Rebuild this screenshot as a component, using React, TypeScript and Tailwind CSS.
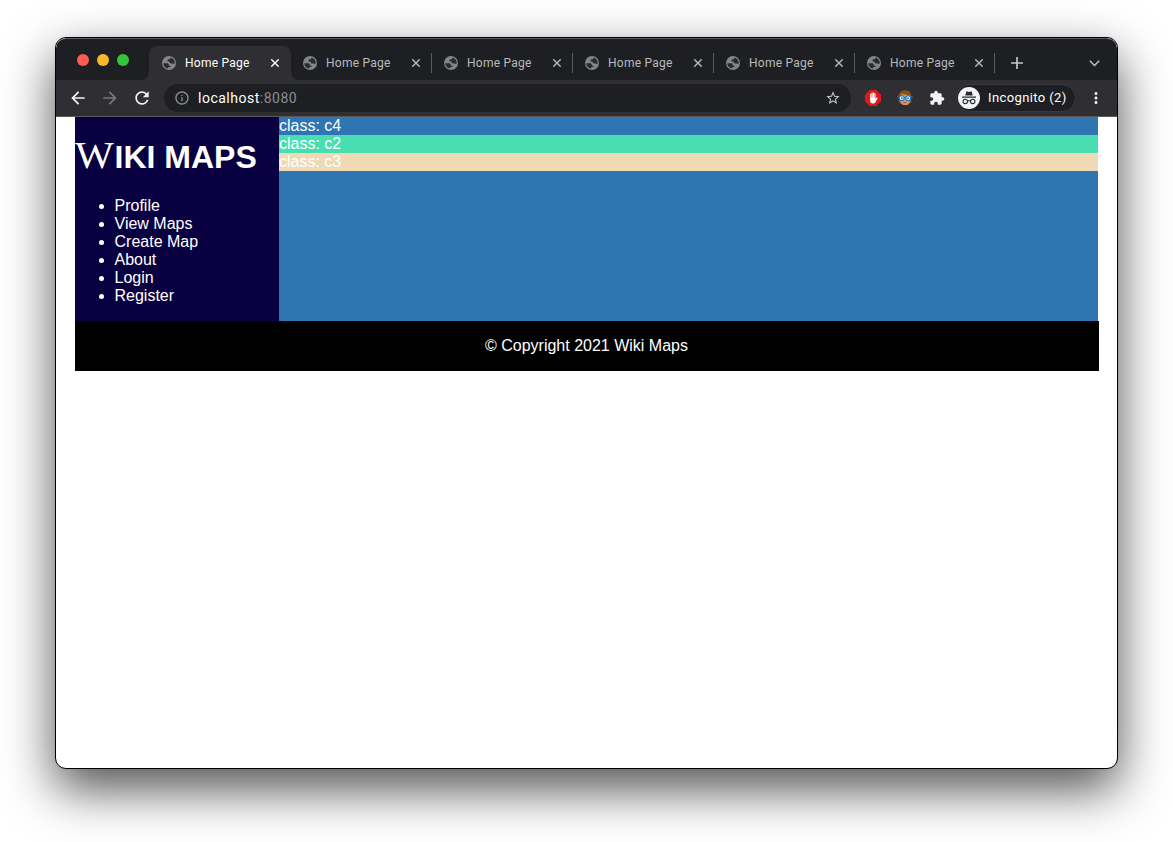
import React from "react";
import { MdArrowBack, MdArrowForward, MdRefresh, MdInfoOutline, MdStarBorder, MdExtension, MdMoreVert } from "react-icons/md";

const links = ["Profile", "View Maps", "Create Map", "About", "Login", "Register"];

function Globe() {
  return (
    <svg className="h-[14px] w-[14px] shrink-0" viewBox="0 0 14 14">
      <circle cx="7" cy="7" r="7" fill="#80868b" />
      <path
        d="M1.300 7.300h3.300c1.500 0 2.200.6 2.200 1.500v.9h1.800v1.300H6.300v1.600C3.500 12.300 1.300 10.100 1.300 7.300zM8.300 1.400c2.500.600 4.300 2.600 4.400 5.200 0 .6-.1 1-.3 1.400-.5-.4-1-.6-1.600-.6H9.100c-1 0-1.500-.5-1.500-1.300v-.5H5.600V4.100c0-.5.300-.8.800-.8h1c.6 0 .9-.4.900-.9z"
        fill="#292a2d"
      />
    </svg>
  );
}

function Close() {
  return (
    <svg className="h-2 w-2 shrink-0" viewBox="0 0 8 8" fill="none" stroke="currentColor" strokeWidth="1.4">
      <path d="M.3.3l7.400 7.400M7.700.3L.3 7.700" />
    </svg>
  );
}

function Tab({ active = false, last = false }: { active?: boolean; last?: boolean }) {
  return (
    <div
      className={
        active
          ? "relative flex h-[34px] w-[142px] items-center rounded-t-lg bg-[#2f2e33] pl-[13px] text-white"
          : "relative flex h-[34px] w-[141px] items-center pl-3 text-[#b8babd]"
      }
    >
      {active && (
        <>
          <svg className="absolute bottom-0 -left-2 h-2 w-2" viewBox="0 0 8 8"><path d="M8 0v8H0a8 8 0 0 0 8-8z" fill="#2f2e33" /></svg>
          <svg className="absolute -right-2 bottom-0 h-2 w-2" viewBox="0 0 8 8"><path d="M0 0v8h8A8 8 0 0 1 0 0z" fill="#2f2e33" /></svg>
        </>
      )}
      <Globe />
      <span className="ml-[9px] w-[77px] text-[12px] leading-[14px] tracking-[0.25px]">Home Page</span>
      <span className={last ? "ml-2" : "ml-[9px]"}><Close /></span>
      {!active && <span className={last ? "absolute right-[1px] top-[7px] h-5 w-px bg-[#5b5c60]" : "absolute right-0 top-[7px] h-5 w-px bg-[#5b5c60]"} />}
    </div>
  );
}

function StopHand() {
  return (
    <svg className="h-4 w-4" viewBox="0 0 16 16">
      <path d="M4.700 0h6.600L16 4.700v6.600L11.300 16H4.700L0 11.300V4.700z" fill="#e0191b" />
      <path
        d="M5.100 9V4.300q0-.6.500-.6t.5.600V7.500h.3V3.200q0-.6.600-.6t.6.600v4h.3V2.900q0-.6.600-.6t.6.600v4.600h.3V3.700q0-.6.500-.6t.6.600v5.100l1.100-1.300q.5-.4.900 0 .2.200 0 .6l-1.800 4q-.7 1.400-2.300 1.400H7.900Q5.100 13.500 5.100 10.300z"
        fill="#fff"
      />
    </svg>
  );
}

function GlassesFace() {
  return (
    <svg className="h-4 w-4" viewBox="0 0 16 16">
      <path d="M2.300 7C1.900 3 4.100.8 8 .8s6.300 2 5.800 6.200l-.6 4.500c-1 3-2.900 3.600-5.200 3.600s-4.200-.8-5-3.600z" fill="#d8945b" />
      <path d="M1.400 7.600C1.300 3.400 3.900.8 7.800.8c4.200 0 6.700 2 6.600 6.300l-.7 1-1.500-3.200C9 5 6.500 4.600 5.100 3.500 4.700 5 3.600 6.200 2.300 6.500z" fill="#87500d" />
      <path d="M1.700 10l1 .3 1 3.500L1.300 12zM14.300 10l-1 .3-1 3.500 2.400-1.800z" fill="#87500d" />
      <circle cx="4.700" cy="8.100" r="2.500" fill="#f1f8ff" stroke="#1878cf" strokeWidth="1.200" />
      <circle cx="11.300" cy="8.100" r="2.500" fill="#f1f8ff" stroke="#1878cf" strokeWidth="1.200" />
      <path d="M.3 7.200h1.500M7.200 7.700h1.600M14.200 7.200h1.500" stroke="#1878cf" strokeWidth="1.200" />
      <circle cx="4.900" cy="8.200" r=".9" fill="#34689b" />
      <circle cx="11.100" cy="8.200" r=".9" fill="#34689b" />
      <path d="M6.500 12.600h3" stroke="#94502d" strokeWidth=".8" />
    </svg>
  );
}

function IncognitoBadge() {
  return (
    <svg className="h-[22px] w-[22px] shrink-0" viewBox="0 0 22 22">
      <circle cx="11" cy="11" r="11" fill="#f1f3f4" />
      <path d="M7.200 8.500l1.100-3.700q.2-.6.800-.4l1.900.5 1.900-.5q.6-.2.800.4l1.100 3.700z" fill="#292a2d" />
      <path d="M4 9.500h14v1.200H4z" fill="#292a2d" />
      <g fill="none" stroke="#292a2d" strokeWidth="1.100">
        <circle cx="7.300" cy="14.400" r="2.200" />
        <circle cx="14.700" cy="14.400" r="2.200" />
        <path d="M9.500 14.100q1.500-.8 3 0" />
      </g>
    </svg>
  );
}

export default function App() {
  return (
    <div className="h-[842px] w-[1173px] overflow-hidden bg-white pl-[55px] pt-[37px]">
      <div className="h-[732px] w-[1063px] overflow-hidden rounded-[11px] border border-black bg-white shadow-[0_20px_50px_rgba(0,0,0,0.69),0_0_2px_rgba(0,0,0,0.1)]">
        <div className="font-['Roboto',sans-serif]">
          <div className="flex h-[42px] items-start rounded-t-[10px] border-t border-[#5a5b5e] bg-[#1e1f22] pt-[7px]">
            <div className="flex w-[93px] gap-2 pl-[21px] pt-[7.500px]">
              <span className="h-3 w-3 rounded-full bg-[#fe5b51]" />
              <span className="h-3 w-3 rounded-full bg-[#fdb727]" />
              <span className="h-3 w-3 rounded-full bg-[#33c63b]" />
            </div>
            <Tab active />
            <Tab />
            <Tab />
            <Tab />
            <Tab />
            <Tab last />
            <svg className="ml-[15px] mt-[11px] h-3 w-3 text-[#c5c7ca]" viewBox="0 0 12 12"><path d="M6 0v12M0 6h12" stroke="currentColor" strokeWidth="1.700" /></svg>
            <svg className="ml-auto mr-[17px] mt-[14px] h-[7px] w-[11px]" viewBox="0 0 11 7" fill="none"><path d="M.8.8l4.700 4.700L10.200.8" stroke="#bfc1c4" strokeWidth="1.500" /></svg>
          </div>
          <div className="flex h-[37px] items-center border-b border-[#5a595c] bg-[#2f2e33] pl-3">
            <MdArrowBack className="h-5 w-5 text-[#f1f3f4]" />
            <MdArrowForward className="ml-3 h-5 w-5 text-[#78797c]" />
            <MdRefresh className="ml-3 h-5 w-5 text-[#f1f3f4]" />
            <div className="ml-[12px] flex h-7 w-[687px] items-center rounded-full bg-[#1e1f22] pl-[10px] pr-[10px]">
              <MdInfoOutline className="h-4 w-4 text-[#8d8f92]" />
              <span className="ml-2 text-[14px] leading-4 tracking-[0.5px] text-white">localhost<span className="text-[#8a8c90]">:8080</span></span>
              <MdStarBorder className="ml-auto h-4 w-4 text-[#c5c7ca]" />
            </div>
            <div className="ml-[14px] flex items-center gap-4">
              <StopHand />
              <GlassesFace />
              <MdExtension className="h-4 w-4 text-[#f1f3f4]" />
            </div>
            <div className="ml-[11px] flex h-7 w-[120px] items-center rounded-full border border-[#39393e] bg-[#1e1f22] pl-px text-white">
              <IncognitoBadge />
              <span className="ml-2 whitespace-nowrap text-[13px] leading-4 tracking-[0.38px]">Incognito (2)</span>
            </div>
            <MdMoreVert className="ml-[10.500px] h-[18px] w-[18px] text-[#f1f3f4]" />
          </div>
        </div>
        <main className="ml-[19px] w-[1024px] font-['Liberation_Sans',Arial,sans-serif] text-[16px] leading-[18px] text-white">
          <div className="flex h-[204px] w-[1023px]">
            <nav className="w-[204px] bg-[#090041]">
              <h1 className="mt-5 flex h-[37px] items-baseline whitespace-nowrap text-[32px] font-bold leading-[37px]">
                <span className="w-[39.500px] origin-left scale-x-108 font-['Liberation_Serif',serif] text-[38px] font-normal">W</span>
                <span>IKI MAPS</span>
              </h1>
              <ul className="mt-[23px] list-disc pl-[39.500px]">
                {links.map((link) => <li key={link}>{link}</li>)}
              </ul>
            </nav>
            <section className="flex-1 bg-[#2e75b1]">
              <p>class: c4</p>
              <p className="bg-[#49deb2]">class: c2</p>
              <p className="bg-[#f0dab5]">class: c3</p>
            </section>
          </div>
          <footer className="flex h-[50px] items-center justify-center bg-black pr-px">© Copyright 2021 Wiki Maps</footer>
        </main>
      </div>
    </div>
  );
}
